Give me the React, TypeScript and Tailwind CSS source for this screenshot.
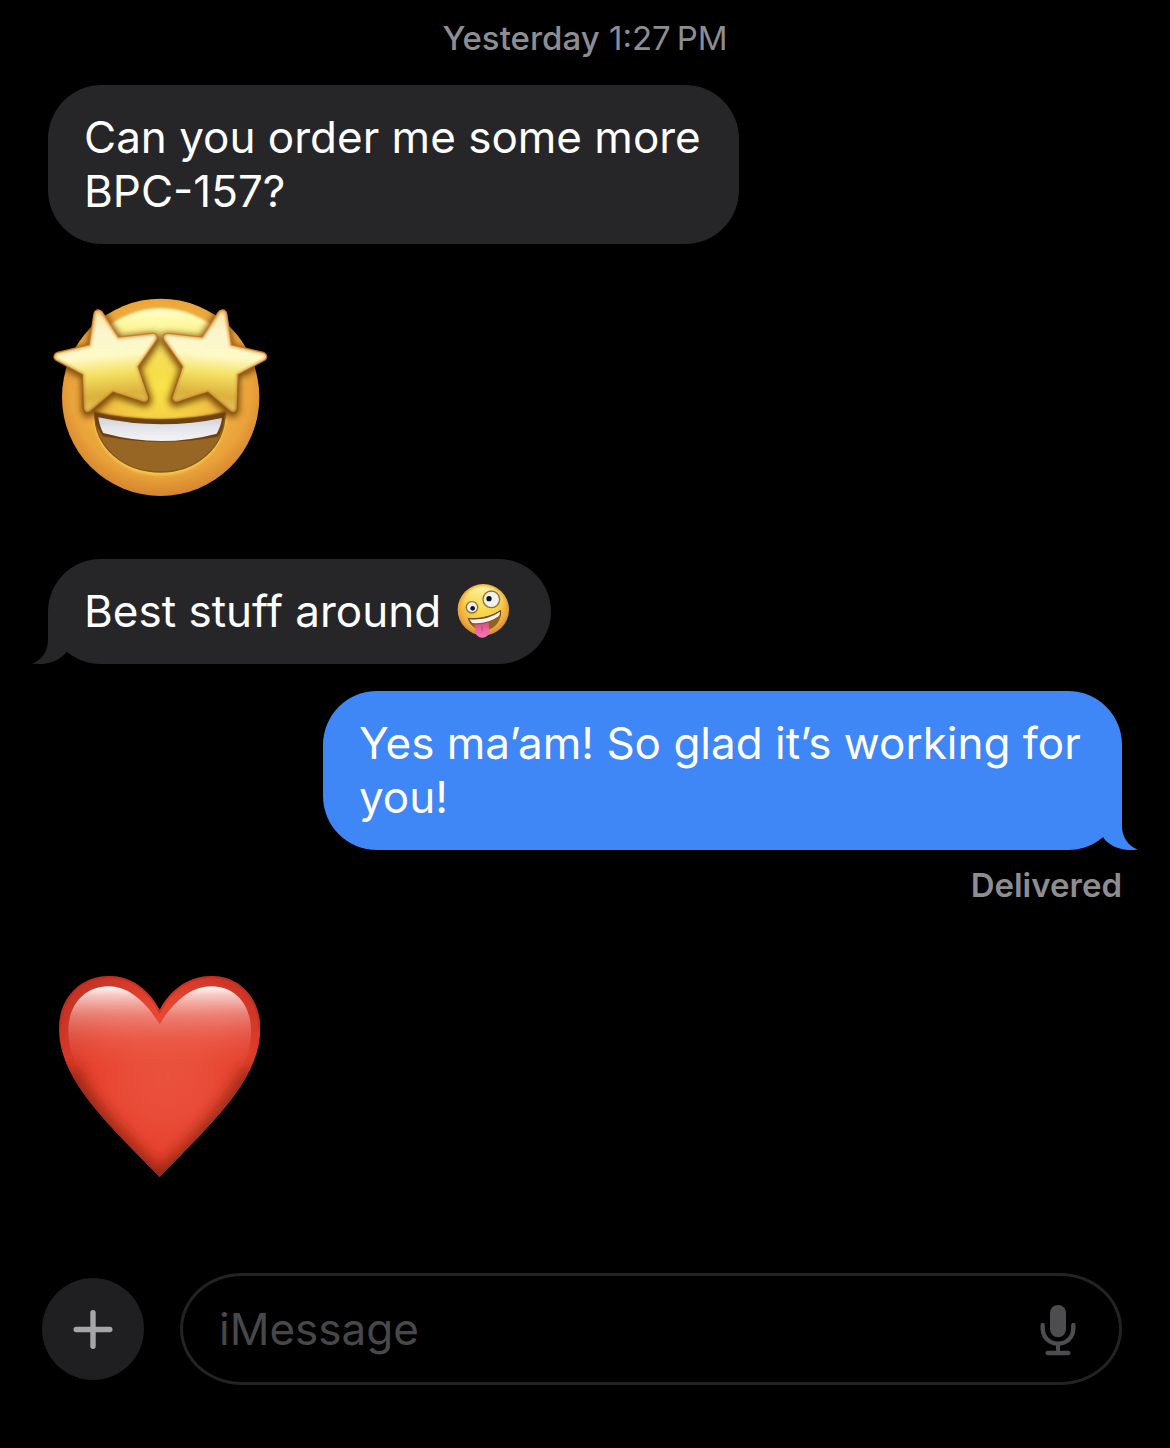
import type { ReactNode } from "react";

const STAR =
  "M175 88 L229 170 L339 158 L280 243 L313 339 L216 307 L143 370 L140 261 L55 215 L159 190 Z";

function Star({ flip = false }: { flip?: boolean }) {
  return (
    <g transform={flip ? "translate(722 0) scale(-1 1)" : undefined} strokeLinejoin="round">
      <g clipPath="url(#se-clip)">
        <path d={STAR} transform="translate(2 6)" fill="#6b3a06" stroke="#6b3a06" strokeWidth="42" opacity="0.85" filter="url(#se-soft)" />
      </g>
      <path d={STAR} fill="#a85f18" stroke="url(#se-edge)" strokeWidth="30" />
      <path d={STAR} fill="url(#se-rim)" stroke="url(#se-rim)" strokeWidth="22" filter="url(#se-blur2)" />
      <path d={STAR} fill="url(#se-star)" stroke="url(#se-star)" strokeWidth="13" filter="url(#se-blur3)" />
    </g>
  );
}

function StarEyesEmoji() {
  return (
    <svg role="img" aria-label="Star-struck face" viewBox="24 0 696 660" className="block h-[220px] w-[232px]">
      <defs>
        <radialGradient id="se-face" gradientUnits="userSpaceOnUse" cx="362" cy="300" r="335">
          <stop offset="0" stopColor="#f9e348" />
          <stop offset="0.3" stopColor="#f5d145" />
          <stop offset="0.6" stopColor="#efb340" />
          <stop offset="0.82" stopColor="#eaa23a" />
          <stop offset="1" stopColor="#d4842e" />
        </radialGradient>
        <linearGradient id="se-high" gradientUnits="userSpaceOnUse" x1="0" y1="70" x2="0" y2="310">
          <stop offset="0" stopColor="#fffcc8" />
          <stop offset="0.2" stopColor="#fff8a0" />
          <stop offset="0.5" stopColor="#f8e464" stopOpacity="0.85" />
          <stop offset="1" stopColor="#f6de4a" stopOpacity="0" />
        </linearGradient>
        <linearGradient id="se-star" gradientUnits="userSpaceOnUse" x1="185" y1="75" x2="215" y2="385">
          <stop offset="0" stopColor="#fbe6a8" />
          <stop offset="0.22" stopColor="#fcf5cd" />
          <stop offset="0.44" stopColor="#fdfac8" />
          <stop offset="0.62" stopColor="#f4e060" />
          <stop offset="0.82" stopColor="#dcb13c" />
          <stop offset="1" stopColor="#e4c768" />
        </linearGradient>
        <linearGradient id="se-rim" gradientUnits="userSpaceOnUse" x1="0" y1="75" x2="0" y2="385">
          <stop offset="0" stopColor="#eaa85a" />
          <stop offset="0.45" stopColor="#ecbd6c" />
          <stop offset="1" stopColor="#bd8428" />
        </linearGradient>
        <linearGradient id="se-edge" gradientUnits="userSpaceOnUse" x1="0" y1="75" x2="0" y2="385">
          <stop offset="0" stopColor="#d98a3c" />
          <stop offset="0.5" stopColor="#b56a20" />
          <stop offset="1" stopColor="#8f5713" />
        </linearGradient>
        <linearGradient id="se-teeth" gradientUnits="userSpaceOnUse" x1="0" y1="395" x2="0" y2="470">
          <stop offset="0" stopColor="#cfd0d8" />
          <stop offset="0.45" stopColor="#e4e5ea" />
          <stop offset="1" stopColor="#f4f4f7" />
        </linearGradient>
        <clipPath id="se-clip">
          <circle cx="360" cy="337" r="296" />
        </clipPath>
        <filter id="se-soft" x="-30%" y="-30%" width="160%" height="160%">
          <feGaussianBlur stdDeviation="10" />
        </filter>
        <filter id="se-blur2" x="-15%" y="-15%" width="130%" height="130%">
          <feGaussianBlur stdDeviation="2" />
        </filter>
        <filter id="se-blur3" x="-15%" y="-15%" width="130%" height="130%">
          <feGaussianBlur stdDeviation="3.5" />
        </filter>
      </defs>
      <circle cx="362" cy="337" r="296" fill="url(#se-face)" />
      <circle cx="362" cy="328" r="258" fill="url(#se-high)" filter="url(#se-blur3)" />
      <path d="M163 384 Q361 426 556 384 C556 494 466 568 361 568 C252 568 163 494 163 384 Z" fill="#f3c64e" stroke="#f3c64e" strokeWidth="6" filter="url(#se-blur3)" />
      <path d="M160 378 Q361 428 560 378 L556 400 Q361 440 166 400 Z" fill="#7d4a10" filter="url(#se-blur3)" />
      <path d="M164 384 Q361 426 555 384 C555 490 466 561 361 561 C252 561 164 488 164 384 Z" fill="#976624" stroke="#875619" strokeWidth="4" />
      <path d="M164 384 Q361 426 555 384 L549 424 Q540 452 532 456 Q361 486 188 454 Q174 430 168 418 Z" fill="#6f430f" filter="url(#se-blur2)" />
      <path d="M175 397 Q361 438 546 399 Q543 424 530 446 Q361 491 190 444 Q179 426 175 397 Z" fill="url(#se-teeth)" />
      <Star />
      <Star flip />
    </svg>
  );
}

function ZanyEmoji() {
  return (
    <svg role="img" aria-label="Zany face" viewBox="52 41 159 162" className="block h-[54px] w-[53px]">
      <defs>
        <radialGradient id="zf-face" gradientUnits="userSpaceOnUse" cx="130" cy="106" r="92">
          <stop offset="0" stopColor="#fbe152" />
          <stop offset="0.5" stopColor="#f6cb48" />
          <stop offset="0.78" stopColor="#ecab3e" />
          <stop offset="1" stopColor="#cf802c" />
        </radialGradient>
        <linearGradient id="zf-high" x1="0" y1="0" x2="0" y2="1">
          <stop offset="0" stopColor="#fff8b0" />
          <stop offset="0.55" stopColor="#fbe860" stopOpacity="0" />
        </linearGradient>
        <linearGradient id="zf-tongue" x1="0" y1="0" x2="0" y2="1">
          <stop offset="0" stopColor="#d8488c" />
          <stop offset="0.5" stopColor="#ee64a4" />
          <stop offset="1" stopColor="#f078b0" />
        </linearGradient>
        <filter id="zf-blur">
          <feGaussianBlur stdDeviation="2.5" />
        </filter>
      </defs>
      <circle cx="131" cy="118" r="77" fill="url(#zf-face)" />
      <circle cx="131" cy="114" r="66" fill="url(#zf-high)" filter="url(#zf-blur)" />
      <circle cx="155" cy="87" r="27" fill="#8f7438" />
      <circle cx="155" cy="87" r="23" fill="#f0f0f0" />
      <circle cx="148" cy="85" r="8" fill="#111" />
      <circle cx="97" cy="111" r="19" fill="#8f7438" />
      <circle cx="97" cy="111" r="15" fill="#f0f0f0" />
      <circle cx="99" cy="114" r="7" fill="#111827" />
      <path d="M84 143 Q139 148 184 119 C187 151 164 180 134 180 C109 180 90 166 84 143 Z" fill="#92601f" />
      <path d="M84 143 Q139 148 184 119 L183 134 Q146 164 93 159 Z" fill="#70430f" />
      <path d="M89 147 Q142 151 181 124 Q181 133 178 137 Q143 163 97 158 Z" fill="#f3f3f5" />
      <path d="M105 163 Q126 165 147 156 L149 181 C150 193 139 202 128 202 C116 202 107 194 106 182 Z" fill="url(#zf-tongue)" />
      <path d="M126 168 L128 182" stroke="#c93c7c" strokeWidth="3" strokeLinecap="round" />
    </svg>
  );
}

function HeartEmoji() {
  return (
    <svg role="img" aria-label="Red heart" viewBox="9 0 681 690" className="block h-[230px] w-[227px]">
      <defs>
        <radialGradient id="h-body" gradientUnits="userSpaceOnUse" cx="365" cy="350" r="370">
          <stop offset="0" stopColor="#e9523d" />
          <stop offset="0.3" stopColor="#e94d39" />
          <stop offset="0.6" stopColor="#e74330" />
          <stop offset="0.78" stopColor="#da3a29" />
          <stop offset="1" stopColor="#c43324" />
        </radialGradient>
        <linearGradient id="h-high" gradientUnits="userSpaceOnUse" x1="0" y1="78" x2="0" y2="330">
          <stop offset="0" stopColor="#fff" />
          <stop offset="0.1" stopColor="#fbdcd8" stopOpacity="0.9" />
          <stop offset="0.35" stopColor="#f09a90" stopOpacity="0.7" />
          <stop offset="0.65" stopColor="#ec6e5e" stopOpacity="0.4" />
          <stop offset="1" stopColor="#ea5441" stopOpacity="0" />
        </linearGradient>
        <clipPath id="h-clip">
          <path d="M344 150 C310 85 255 48 193 48 C105 48 42 115 42 205 C42 360 188 490 344 651 C500 490 646 360 646 205 C646 115 585 48 500 48 C435 48 378 85 344 150 Z" />
        </clipPath>
        <filter id="h-soft" x="-20%" y="-20%" width="140%" height="140%">
          <feGaussianBlur stdDeviation="20" />
        </filter>
        <filter id="h-edge">
          <feGaussianBlur stdDeviation="2" />
        </filter>
      </defs>
      <g clipPath="url(#h-clip)">
        <rect x="30" y="30" width="630" height="640" fill="url(#h-body)" />
        <path d="M70 330 C130 450 230 550 344 664 C460 550 560 450 622 330" fill="none" stroke="#86200f" strokeWidth="50" opacity="0.85" filter="url(#h-soft)" />
        <path d="M42 205 C42 115 105 48 193 48 C255 48 310 85 344 150 C378 85 435 48 500 48 C585 48 646 115 646 205" fill="none" stroke="#a82a1c" strokeWidth="12" opacity="0.4" filter="url(#h-edge)" />
        <path d="M344 193 C296 115 245 79 190 79 C118 79 70 136 70 212 C70 255 84 300 105 335 L585 335 C606 300 618 255 618 212 C618 136 572 79 500 79 C443 79 392 115 344 193 Z" fill="url(#h-high)" filter="url(#h-edge)" />
      </g>
    </svg>
  );
}

function Tail({ side }: { side: "left" | "right" }) {
  return (
    <svg
      aria-hidden="true"
      viewBox="0 0 40 60"
      className={
        side === "left"
          ? "absolute bottom-0 -left-4 h-[60px] w-10 fill-[#262628]"
          : "absolute -right-4 bottom-0 h-[60px] w-10 -scale-x-100 fill-[#3f86f7]"
      }
    >
      <path d="M16 8 L16 36 C16 47 10 56 0 59.5 C13 61.5 27 58 34.5 48 L40 30 L40 8 Z" />
    </svg>
  );
}

function Bubble({ className, tail, children }: { className: string; tail?: "left" | "right"; children: ReactNode }) {
  return (
    <div className={`relative max-w-full rounded-[54px] pt-[25px] pb-[26px] pl-9 text-[44px] leading-[54px] text-white ${className}`}>
      {tail && <Tail side={tail} />}
      <div className="relative">{children}</div>
    </div>
  );
}

export default function App() {
  return (
    <div className="flex min-h-screen flex-col bg-black pt-[18px] pb-[63px] font-['Inter',sans-serif]">
      <main className="flex flex-col px-12">
        <time className="text-center text-[33px] leading-10 text-[#8d8d92]">
          <span className="font-medium">Yesterday</span> 1:27{"\u202f"}PM
        </time>

        <Bubble className="mt-[27px] w-[691px] self-start bg-[#262628]">Can you order me some more BPC-157?</Bubble>

        <div className="mt-[41px]">
          <StarEyesEmoji />
        </div>

        <Bubble tail="left" className="mt-[54px] self-start bg-[#262628] pr-[41px]">
          <span className="flex items-center gap-4">
            Best stuff around <ZanyEmoji />
          </span>
        </Bubble>

        <Bubble tail="right" className="mt-[27px] w-[799px] self-end bg-[#3f86f7]">
          Yes ma’am! So glad it’s working for you!
        </Bubble>
        <p className="mt-[15px] text-right text-[33px] leading-10 font-semibold text-[#8d8d92]">Delivered</p>

        <div className="mt-[55px]">
          <HeartEmoji />
        </div>
      </main>

      <form className="mt-[83px] flex items-center gap-9 pr-12 pl-[42px]" onSubmit={(e) => e.preventDefault()}>
        <button type="button" aria-label="Add attachment" className="flex size-[102px] shrink-0 items-center justify-center rounded-full bg-[#1f1f21]">
          <svg aria-hidden="true" viewBox="0 0 40 40" className="size-10 stroke-[#a6a6a8]" strokeWidth="5.4" strokeLinecap="round">
            <path d="M3.2 20.5H36.8M20 3.7V37.3" />
          </svg>
        </button>
        <div className="flex h-28 min-w-0 flex-1 items-center rounded-[62px/56px] border-[3px] border-[#232324] pr-[41px] pl-9">
          <input
            type="text"
            aria-label="iMessage"
            placeholder="iMessage"
            className="min-w-0 flex-1 bg-transparent text-[44px] leading-[54px] text-white outline-none placeholder:text-[#48484a]"
          />
          <button type="button" aria-label="Dictate" className="shrink-0">
            <svg aria-hidden="true" viewBox="235 123 120 168" className="block h-14 w-10">
              <rect x="271" y="135" width="48" height="97" rx="24" fill="#4d4d4f" />
              <path d="M249 195 V204 C249 233 270 251 295 251 C320 251 341 233 341 204 V195" fill="none" stroke="#4d4d4f" strokeWidth="13" strokeLinecap="round" />
              <path d="M295 252 V279" stroke="#4d4d4f" strokeWidth="12" />
              <path d="M264 279 H326" stroke="#4d4d4f" strokeWidth="13" strokeLinecap="round" />
            </svg>
          </button>
        </div>
      </form>
    </div>
  );
}
